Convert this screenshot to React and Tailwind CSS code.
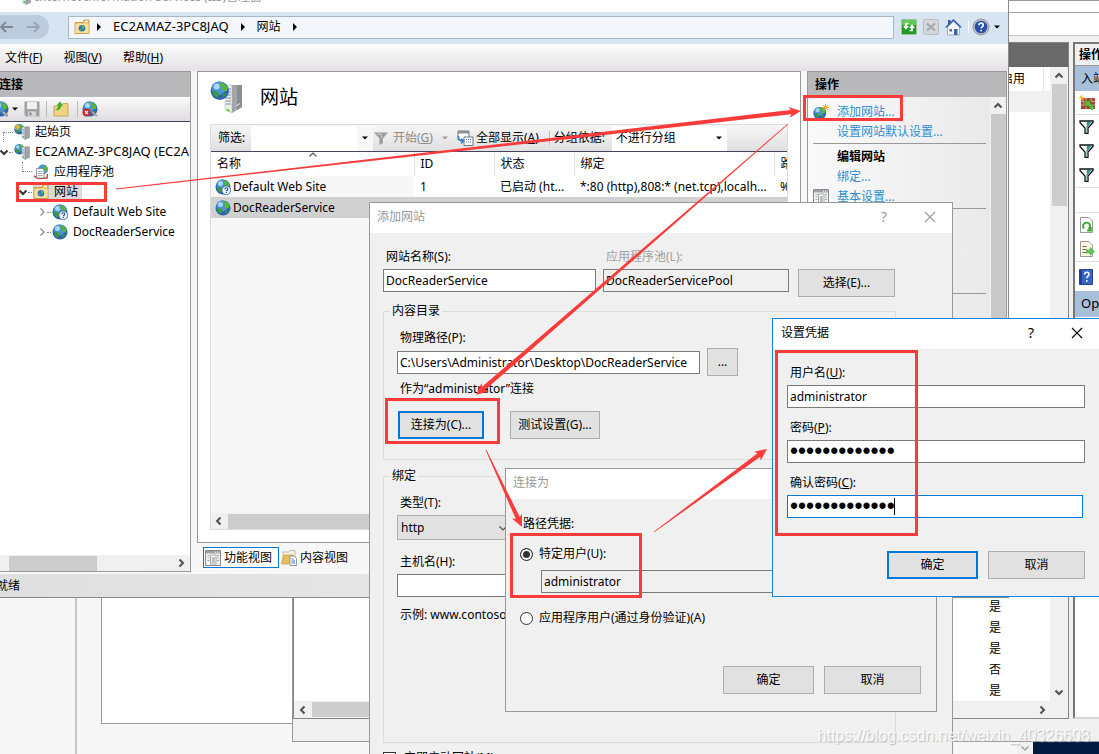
import { clsx } from "clsx";

/* ---------- icons ---------- */

function GlobeShape() {
  return (
    <g>
      <circle cx="8" cy="8" r="7.5" fill="#2b62b4" />
      <circle cx="7" cy="6" r="5.5" fill="#4c93dd" />
      <circle cx="5.5" cy="4.5" r="2.5" fill="#a9d6f5" />
      <path d="M8 1.2l4 .8 2.6 3.2-.8 3-2.6.4-2-2 .6-2-2-1.4z" fill="#57b53c" />
      <path d="M2 7.5l3 .6 2.4 2-.8 2.6L5.4 14 2.6 11z" fill="#3d9a33" />
      <path d="M10.5 10.5l2.8-.5-1 2.6-2.2 1.2z" fill="#3d9a33" />
    </g>
  );
}

function Globe({ size = 16, badge }) {
  return (
    <svg width={size} height={size} viewBox="0 0 16 16" className="shrink-0">
      {badge === "new" ? (
        <g transform="translate(0 2.500) scale(.84)">
          <GlobeShape />
        </g>
      ) : (
        <GlobeShape />
      )}
      {badge === "help" && (
        <g>
          <circle cx="11.3" cy="11.3" r="4.4" fill="#e9f1fb" stroke="#3a5f9c" strokeWidth=".8" />
          <path d="M9.9 10.2c0-1.9 2.9-1.8 2.9 0 0 1-1.4 1.1-1.4 2M11.4 13v.9" fill="none" stroke="#26498a" strokeWidth="1.1" />
        </g>
      )}
      {badge === "stop" && (
        <g>
          <path d="M10 11l5 4" stroke="#9ba3ad" strokeWidth="2.200" />
          <circle cx="4.5" cy="11.5" r="4" fill="#c3272b" />
          <path d="M2.900 9.9l3.2 3.2M6.100 9.9l-3.2 3.2" stroke="#fff" strokeWidth="1.2" />
        </g>
      )}
      {badge === "plug" && <path d="M8 10l4 1 3 3-1 1.5-3.500-2z" fill="#a8b0b9" stroke="#6d7680" strokeWidth=".6" />}
      {badge === "new" && (
        <g stroke="#e9a21b">
          <path d="M12.500 0v7M9 3.500h7M10 1l5 5M15 1l-5 5" />
          <circle cx="12.500" cy="3.500" r="1" fill="#ffe27a" />
        </g>
      )}
    </svg>
  );
}

function SiteFolder() {
  return (
    <svg width="16" height="16" viewBox="0 0 16 16" className="shrink-0">
      <path d="M1 3.500h8l1-2.500h5v13.500H1z" fill="#eccb76" stroke="#b98f35" strokeWidth=".8" />
      <path d="M11 2.200h3" stroke="#fff" />
      <path d="M1.500 5h13v9h-13z" fill="#f6df9f" />
      <circle cx="8" cy="9.300" r="3.300" fill="#2f74c4" />
      <path d="M8 6.200l2.500 1-.5 2.500-2-.5zM5.500 9l2 1-.5 2.200z" fill="#5dbb3f" />
    </svg>
  );
}

function ServerIcon({ size = 16, star }) {
  return (
    <svg width={size} height={size} viewBox="0 0 16 16" className="shrink-0">
      <g transform="scale(.68)">
        <GlobeShape />
      </g>
      <path d="M8 3.500l3-.7v12.700L8 14z" fill="#e3e5e8" stroke="#9aa0a6" strokeWidth=".4" />
      <path d="M11 2.800h4.500v10.700L11 15.500z" fill="#9fa4a9" stroke="#73787d" strokeWidth=".4" />
      <path d="M8.500 5.500h2M8.500 7h2M8.500 8.500h2M8.500 10h2" stroke="#7d838a" strokeWidth=".6" />
      <circle cx="9.500" cy="13" r=".9" fill="#48c22c" />
      {star && <path d="M3 0v6M0 3h6M1 1l4 4M5 1L1 5" stroke="#f0b429" strokeWidth="1" />}
    </svg>
  );
}

function BigServer() {
  return (
    <svg width="34" height="34" viewBox="0 0 34 34" className="shrink-0">
      <path d="M15 5l7-1v28l-7-4z" fill="#eceef0" stroke="#b5b9bd" strokeWidth=".6" />
      <path d="M22 4h10v22l-10 6z" fill="#a4a7aa" />
      <path d="M27 4h5v22l-5 3z" fill="#8b8e91" />
      <path d="M16 8h5M16 11h5M16 14h5M16 17h5M16 20h5M16 23h5" stroke="#83888d" strokeWidth="1.200" />
      <path d="M16.500 28.500l3 1.500" stroke="#6bd23c" strokeWidth="2" />
      <path d="M26 25l4-2.500" stroke="#e8e8e8" strokeWidth="1" />
      <g transform="scale(1.220)">
        <GlobeShape />
      </g>
    </svg>
  );
}

function PoolIcon() {
  return (
    <svg width="16" height="16" viewBox="0 0 16 16" className="shrink-0">
      <circle cx="10" cy="5.500" r="5" fill="#4a8fd0" />
      <path d="M10 .8l3.500 1.500 1 4-2 2-2-3z" fill="#5bb540" />
      <path d="M1 12l4 2.500 9-.5.500-4" fill="none" stroke="#cf3a32" strokeWidth="1.500" />
      <path d="M3.500 4.500h6l1.500 1.500v8H3.500z" fill="#fff" stroke="#7c828a" strokeWidth=".8" />
      <path d="M5 7.500h4.500M5 9.500h4.500M5 11.500h4.500" stroke="#8f9bb0" strokeWidth=".8" />
    </svg>
  );
}

function FloppyIcon() {
  return (
    <svg width="16" height="16" viewBox="0 0 16 16" className="shrink-0">
      <path d="M.5.5h15v15H2L.5 14z" fill="#a2a2a4" />
      <path d="M3 1h10v7H3z" fill="#f1f1f1" />
      <path d="M4 10.500h8v5H4z" fill="#d8d8d8" />
      <path d="M5.500 11.500h2v3h-2z" fill="#8a8a8c" />
    </svg>
  );
}

function FolderUp() {
  return (
    <svg width="16" height="16" viewBox="0 0 16 16" className="shrink-0">
      <path d="M1 5h8l1-2.500h5V15H1z" fill="#f0d283" stroke="#c19a43" strokeWidth=".8" />
      <path d="M2 9c2-.5 3-2 3.200-4.500H3.500L7 .5l3 4H8.200C8 8 5.500 10 2 9z" fill="#3cad2f" />
    </svg>
  );
}

function HelpCircle() {
  return (
    <svg width="18" height="18" viewBox="0 0 18 18" className="shrink-0">
      <circle cx="9" cy="9" r="8" fill="#b9bfc9" stroke="#8b919c" strokeWidth=".8" />
      <circle cx="9" cy="9" r="6.300" fill="#2951a8" />
      <path d="M6.800 7.300c0-3 4.500-2.900 4.500 0 0 1.500-2.200 1.600-2.200 3M9.100 11.700v1.600" fill="none" stroke="#fff" strokeWidth="1.600" />
    </svg>
  );
}

function HomeIcon() {
  return (
    <svg width="17" height="17" viewBox="0 0 17 17" className="shrink-0">
      <path d="M3 1h2.500v5H3z" fill="#3a57a6" />
      <path d="M2.500 8L8.500 2.500 14.500 8v8h-12z" fill="#f1f3f8" stroke="#8c94a8" strokeWidth=".7" />
      <path d="M.8 8.500L8.500 1l7.700 7.500" fill="none" stroke="#3d5cae" strokeWidth="1.500" />
      <path d="M9 10h3.500v6H9z" fill="#2f66b8" />
      <path d="M4.500 10h2.500v2.500H4.500z" fill="#667" />
    </svg>
  );
}

function RefreshBox() {
  return (
    <svg width="16" height="16" viewBox="0 0 16 16" className="shrink-0">
      <rect x=".5" y=".5" width="15" height="15" rx="1" fill="#249a25" stroke="#9fc29c" />
      <path d="M1 1h14v5H1z" fill="#62c755" />
      <path d="M7.500 4.500H5v4M2.800 7L5 9.500 7.200 7M8.500 11.500h2.500v-4M8.800 9L11 6.500 13.200 9" fill="none" stroke="#fff" strokeWidth="1.600" />
    </svg>
  );
}

function StopBox() {
  return (
    <svg width="16" height="16" viewBox="0 0 16 16" className="shrink-0">
      <rect x=".5" y=".5" width="15" height="15" rx="1" fill="#d5d7da" stroke="#b9bcc0" />
      <path d="M4 4.500l8 7M12 4.500l-8 7" stroke="#a3a6aa" strokeWidth="2" />
    </svg>
  );
}

function Funnel({ className = "text-[#9b9b9b]" }) {
  return (
    <svg width="16" height="16" viewBox="0 0 16 16" className={clsx("shrink-0", className)}>
      <path d="M1 2.500h14L9.800 8.500v4.800L6.500 15V8.500z" fill="currentColor" />
      <path d="M4 4h4l1 4" fill="none" stroke="#fff" strokeOpacity=".5" />
    </svg>
  );
}

function TealFunnel() {
  return (
    <svg width="15" height="14" viewBox="0 0 15 14" className="shrink-0">
      <path d="M1 1h13v1.500L9 8v5.500H6V8L1 2.500z" fill="#fff" stroke="#111" strokeWidth="1.300" />
      <path d="M8 2h4.500L8.500 7v5.500H7.500V7z" fill="#2a9090" />
    </svg>
  );
}

function ShowAll() {
  return (
    <svg width="17" height="16" viewBox="0 0 17 16" className="shrink-0">
      <path d="M1 1h11v9H1z" fill="#fff" stroke="#70757d" />
      <path d="M1 1h11v2.500H1z" fill="#8c919a" />
      <path d="M7 7h9v8.500H7z" fill="#fff" stroke="#70757d" />
      <path d="M9 9.500h1M11 9.500h1M13 9.500h1M9 12h1M11 12h1M13 12h1" stroke="#4a6cb5" strokeWidth="1.200" />
      <path d="M1.500 6c0 4 1 5 4 5M4 8.500L6.500 11 4 13.500" fill="none" stroke="#2e86c8" strokeWidth="1.600" />
    </svg>
  );
}

function FormIcon() {
  return (
    <svg width="16" height="16" viewBox="0 0 16 16" className="shrink-0">
      <path d="M.5.5h15v15H.5z" fill="#f3f3f3" stroke="#85888c" />
      <path d="M1 1h14v2.500H1z" fill="#9da1a6" />
      <path d="M10 2.200h1M12 2.200h1M14 2.200h.6" stroke="#fff" />
      <path d="M2.500 5.500h2M2.500 8h2M2.500 10.500h2M12 5.500h2M12 8h2M12 10.500h2" stroke="#a3a7ac" />
      <path d="M5.500 5h5.500v9H5.500z" fill="#fff" stroke="#8d9196" strokeWidth=".8" />
      <path d="M6.800 8h3M6.800 10h3M6.800 12h3" stroke="#555" strokeWidth=".8" />
    </svg>
  );
}

function ContentIcon() {
  return (
    <svg width="16" height="16" viewBox="0 0 16 16" className="shrink-0">
      <path d="M2 2h6l1-1.500h5V12H2z" fill="#f7f1de" stroke="#a7a18b" strokeWidth=".7" />
      <path d="M.5 14L3 5h9l-2 9z" fill="#e8bd5c" stroke="#b98f35" strokeWidth=".6" />
      <path d="M9 6h4l2.500 2.500v7H9z" fill="#fff" stroke="#7c828a" strokeWidth=".8" />
      <path d="M10.500 9h2M10.500 11h3.500M10.500 13h3.500" stroke="#3b6fc0" strokeWidth="1" />
    </svg>
  );
}

function WallIcon() {
  return (
    <svg width="16" height="16" viewBox="0 0 16 16" className="shrink-0">
      <path d="M2 3h14v11H2z" fill="#a4452f" />
      <path d="M2 6.500h14M2 10h14M7 3v3.500M12 3v3.500M5 6.500V10M10 6.500V10M7 10v4" stroke="#e2b5a2" strokeWidth=".8" />
      <path d="M3 0v6M0 3h6M1 1l4 4" stroke="#f0b429" />
      <path d="M6 6h6L10.500 8l5 4.500L13 15l-4.500-5L6.500 12z" fill="#58c43d" stroke="#2e8a22" strokeWidth=".6" />
    </svg>
  );
}

function PageIcon({ kind }) {
  return (
    <svg width="16" height="16" viewBox="0 0 16 16" className="shrink-0">
      <path d="M1.500.5H10L13.500 4v11.500h-12z" fill={kind === "export" ? "#fbf6df" : "#fff"} stroke="#999" />
      {kind === "refresh" ? (
        <path d="M5 11.500A3.500 3.500 0 1 1 9.500 12M11.800 10v3.500H8.200" fill="none" stroke="#35a72f" strokeWidth="1.900" />
      ) : (
        <g>
          <path d="M3.500 5.500h4M3.500 8.500h4M3.500 11.500h4" stroke="#666" />
          <path d="M7.500 9H11V6.500l4.500 4L11 14.500V12H7.500z" fill="#62c755" stroke="#389a2d" strokeWidth=".5" />
        </g>
      )}
    </svg>
  );
}

function HelpBook() {
  return (
    <svg width="14" height="16" viewBox="0 0 14 16" className="shrink-0">
      <path d="M.5.5h13v15H.5z" fill="#3a63c8" stroke="#24418c" />
      <path d="M1 1h2v14H1z" fill="#24418c" />
      <path d="M5.500 5.500c0-3 4.500-2.800 4.500 0 0 1.700-2.200 1.700-2.200 3.800M7.800 11v1.800" fill="none" stroke="#fff" strokeWidth="1.500" />
    </svg>
  );
}

const chevrons = {
  left: "M6.500 1.500L3 5l3.500 3.500",
  right: "M3.500 1.500L7 5 3.500 8.500",
  up: "M1.500 6.500L5 3l3.500 3.500",
  down: "M1.500 3.500L5 7l3.500-3.500",
};

function Chevron({ dir, className = "text-[#505050]", thin }) {
  return (
    <svg width="10" height="10" viewBox="0 0 10 10" className={clsx("shrink-0", className)}>
      <path d={chevrons[dir]} fill="none" stroke="currentColor" strokeWidth={thin ? 1.2 : 2} />
    </svg>
  );
}

function Caret({ dir = "down", className = "text-black" }) {
  return (
    <svg width="6" height="8" viewBox="0 0 6 8" className={clsx("shrink-0", className)}>
      <path d={dir === "down" ? "M0 2.500h6L3 5.500z" : "M1 0l4 4-4 4z"} fill="currentColor" />
    </svg>
  );
}

/* ---------- shared controls ---------- */

function Btn({ children, className, primary }) {
  return (
    <button
      className={clsx(
        "h-7 shrink-0 bg-[#e1e1e1] text-center",
        primary ? "border-2 border-[#0078d7]" : "border border-[#adadad]",
        className
      )}
    >
      {children}
    </button>
  );
}

function TextBox({ className, ...props }) {
  return (
    <input
      className={clsx("h-[23px] min-w-0 rounded-none border px-[2px] outline-none", className)}
      {...props}
    />
  );
}

function Dialog({ title, active, help = true, className, children }) {
  return (
    <section
      className={clsx(
        "absolute flex flex-col border bg-[#f0f0f0]",
        active ? "border-[#1883d7]" : "border-[#999]",
        className
      )}
    >
      <header
        className={clsx(
          "flex h-[30px] shrink-0 items-center justify-between bg-white pr-4 pb-[2px]",
          active ? "pl-2 text-black" : "pl-[7px] text-[#999]"
        )}
      >
        <h2>{title}</h2>
        {help && (
          <div className="flex items-center gap-[34px]">
            <button className="w-3 text-sm" aria-label="帮助">?</button>
            <button aria-label="关闭">
              <svg width="12" height="12" viewBox="0 0 12 12">
                <path d="M1 1l10 10M11 1L1 11" stroke="currentColor" strokeWidth="1.100" />
              </svg>
            </button>
          </div>
        )}
      </header>
      {children}
    </section>
  );
}

function TreeRow({ guide, open, icon, label, selected }) {
  return (
    <li className="flex h-5 items-center whitespace-nowrap">
      <span className={clsx("shrink-0 border-dotted border-[#888]", guide)} />
      {open !== undefined && (
        <Chevron dir={open ? "down" : "right"} thin={!open} className={open ? "text-[#333]" : "text-[#888]"} />
      )}
      {open !== undefined && <span className="w-1 shrink-0 border-t border-dotted border-[#888]" />}
      <span className={clsx("ml-px flex items-center gap-[5px] pr-1", selected && "bg-[#d9d9d9]")}>
        {icon}
        {label}
      </span>
    </li>
  );
}

/* ---------- windows ---------- */

function ServerManager() {
  return (
    <div className="absolute inset-0 flex bg-[#f7f7f7]">
      <div className="w-[77px] border-r-2 border-[#c8c8c8]" />
      <div className="mb-[30px] ml-6 w-72 border border-[#999] bg-white" />
    </div>
  );
}

const enabledRules = ["是", "是", "是", "否", "是"];

function Firewall() {
  return (
    <div className="absolute top-0 left-[292px] flex h-[742px] w-[840px] flex-col border border-[#999] bg-[#f0f0f0]">
      <div className="h-3 shrink-0 border-b border-[#a0a0a0] bg-white" />
      <div className="h-[23px] shrink-0 border-b border-[#c8c8c8] bg-white" />
      <div className="flex min-h-0 flex-1 gap-1 pt-[6px] pb-[22px]">
        <div className="flex w-[776px] shrink-0 flex-col border border-[#82858f] bg-white">
          <div className="h-6 shrink-0 bg-[#696969]" />
          <div className="flex min-h-0 flex-1">
            <div className="flex flex-1 flex-col">
              <div className="mr-[6px] flex h-6 shrink-0 items-center justify-end border-r border-[#e5e5e5] pr-[18px]">
                启用
              </div>
              <div className="h-[21px] shrink-0 bg-[#f0f0f0]" />
              <div className="flex-1" />
              <table className="w-full">
                <tbody>
                  {enabledRules.map((value, i) => (
                    <tr key={i} className="h-[21px]">
                      <td className="pr-[49px] text-right leading-[21px]">{value}</td>
                    </tr>
                  ))}
                </tbody>
              </table>
            </div>
            <div className="flex w-[18px] flex-col items-center bg-[#f0f0f0]">
              <div className="flex h-[17px] items-center">
                <Chevron dir="up" />
              </div>
              <div className="h-[122px] w-[15px] bg-[#cdcdcd]" />
              <div className="flex flex-1 items-end pb-1">
                <Chevron dir="down" />
              </div>
            </div>
          </div>
          <div className="flex h-[17px] shrink-0 items-center bg-[#f0f0f0] pr-[21px] pl-1">
            <Chevron dir="left" />
            <div className="mr-8 ml-1 h-[15px] w-[500px] bg-[#cdcdcd]" />
            <div className="flex-1" />
            <Chevron dir="right" />
          </div>
        </div>
        <div className="flex flex-1 flex-col border-2 border-r-0 border-[#777] border-b-[#d5d5d5] bg-white">
          <div className="flex h-[22px] items-center border-b border-[#999] bg-[#f0f0f0] pl-1 font-bold">操作</div>
          <div className="flex h-[25px] items-center bg-[#a8bfdb] pl-[6px]">入站</div>
          <div className="flex h-6 items-center border-b border-[#e0e0e0] pl-1"><WallIcon /></div>
          <div className="flex h-6 items-center pl-1"><TealFunnel /></div>
          <div className="flex h-6 items-center pl-1"><TealFunnel /></div>
          <div className="flex h-6 items-center pl-1"><TealFunnel /></div>
          <div className="h-[26px] border-y border-[#e0e0e0]" />
          <div className="flex h-6 items-center pl-1"><PageIcon kind="refresh" /></div>
          <div className="flex h-6 items-center pl-1"><PageIcon kind="export" /></div>
          <div className="flex h-[30px] items-center border-t border-[#e0e0e0] pl-1"><HelpBook /></div>
          <div className="flex h-[26px] items-center bg-[#a8bfdb] pl-[6px] text-[13px]">Op</div>
        </div>
      </div>
    </div>
  );
}

function NavBar() {
  return (
    <div className="flex h-8 shrink-0 items-center bg-[#d7e4f2] pr-2 pb-[2px]">
      <div className="flex h-6 w-[56px] items-center justify-between rounded-r-xl bg-[#bccbdd] pr-2 pl-[6px] text-[#7d8896]">
        <svg width="14" height="12" viewBox="0 0 14 12">
          <path d="M14 6H2M7 1L2 6l5 5" fill="none" stroke="currentColor" strokeWidth="1.800" />
        </svg>
        <svg width="14" height="12" viewBox="0 0 14 12" className="text-[#9aa6b5]">
          <path d="M0 6h12M7 1l5 5-5 5" fill="none" stroke="currentColor" strokeWidth="1.800" />
        </svg>
      </div>
      <div className="ml-[19px] flex h-[23px] flex-1 items-center border border-[#a8b6c6] bg-[#f3f7fc] pl-[5px]">
        <SiteFolder />
        <span className="ml-[6px] flex items-center gap-[11px]">
          <Caret dir="right" />
          <span className="text-[13px]">EC2AMAZ-3PC8JAQ</span>
          <Caret dir="right" />
          <span>网站</span>
          <Caret dir="right" />
        </span>
      </div>
      <div className="ml-[7px] flex items-center gap-[6px]">
        <RefreshBox />
        <StopBox />
        <HomeIcon />
        <span className="h-3 w-px bg-white" />
      </div>
      <div className="ml-[3px] flex items-center gap-1">
        <HelpCircle />
        <Caret />
      </div>
    </div>
  );
}

function Connections() {
  return (
    <div className="flex w-[199px] shrink-0 flex-col border border-[#999] bg-white">
      <h3 className="flex h-[25px] shrink-0 items-center bg-[#b9b8ba] pl-[6px] font-bold">连接</h3>
      <div className="flex h-[25px] shrink-0 items-center border-b border-[#44445c] bg-linear-to-b from-[#fafafa] to-[#dedcde]">
        <Globe badge="plug" />
        <span className="ml-[3px]"><Caret /></span>
        <span className="ml-[6px]"><FloppyIcon /></span>
        <span className="mx-[6px] h-4 w-px bg-[#bdbdb0]" />
        <FolderUp />
        <span className="mr-1 ml-2 h-4 w-px bg-[#bdbdb0]" />
        <Globe badge="stop" />
      </div>
      <ul className="flex-1 overflow-hidden">
        <TreeRow guide="ml-[10px] h-[10px] w-[10px] self-end border-t border-l" icon={<ServerIcon star />} label="起始页" />
        <TreeRow guide="w-[6px]" open icon={<ServerIcon />} label={<span className="text-[13px]">EC2AMAZ-3PC8JAQ (EC2AMAZ</span>} />
        <TreeRow guide="ml-[29px] h-[10px] w-[10px] self-start border-b border-l" icon={<PoolIcon />} label="应用程序池" />
        <TreeRow guide="w-[25px]" open icon={<SiteFolder />} label="网站" selected />
        <TreeRow guide="w-11" open={false} icon={<Globe badge="help" />} label="Default Web Site" />
        <TreeRow guide="w-11" open={false} icon={<Globe />} label="DocReaderService" />
      </ul>
      <div className="flex h-4 shrink-0 items-center bg-[#f0f0f0] pr-1">
        <Chevron dir="left" />
        <div className="ml-[6px] h-[15px] w-[88px] bg-[#cdcdcd]" />
        <div className="flex-1" />
        <Chevron dir="right" />
      </div>
    </div>
  );
}

function SitesTable() {
  return (
    <table className="w-[780px] table-fixed border-collapse bg-white text-left">
      <thead>
        <tr className="h-6 [&>th]:border-r [&>th]:border-[#e2e2e2] [&>th]:pl-[6px] [&>th]:font-normal">
          <th className="w-[203px]">名称</th>
          <th className="w-20">ID</th>
          <th className="w-20">状态</th>
          <th className="w-[200px]">绑定</th>
          <th>路径</th>
        </tr>
      </thead>
      <tbody className="whitespace-nowrap [&_td]:pl-[6px]">
        <tr className="h-[21px]">
          <td className="bg-[#f7f7f7]">
            <span className="-ml-[2px] flex items-center gap-[2px]"><Globe badge="help" />Default Web Site</span>
          </td>
          <td>1</td>
          <td>已启动 (ht...</td>
          <td>*:80 (http),808:* (net.tcp),localh...</td>
          <td>%S</td>
        </tr>
        <tr className="h-[21px] bg-[#d1d1d1]">
          <td>
            <span className="-ml-[2px] flex items-center gap-[2px]"><Globe />DocReaderService</span>
          </td>
          <td />
          <td />
          <td />
          <td />
        </tr>
      </tbody>
    </table>
  );
}

function Sites() {
  return (
    <div className="flex min-w-0 flex-1 flex-col">
      <div className="flex flex-1 flex-col border border-[#999] bg-white px-3 pb-3">
        <div className="flex h-[52px] shrink-0 items-center gap-4">
          <BigServer />
          <h1 className="text-[19px]">网站</h1>
        </div>
        <div className="relative flex flex-1 flex-col overflow-hidden border border-[#dcdcdc] bg-[#f7f7f7]">
          <div className="flex h-[27px] shrink-0 items-center border-b border-[#44445c] bg-linear-to-b from-[#f6f6f6] to-[#e0dfe1] whitespace-nowrap">
            <label htmlFor="filter" className="w-10 shrink-0 pl-[7px]">筛选:</label>
            <input id="filter" className="h-[25px] w-[106px] bg-white outline-none" />
            <button className="flex h-[25px] w-4 items-center justify-center bg-[#f7f7f7]" aria-label="筛选历史"><Caret /></button>
            <button className="flex items-center gap-1 text-[#8c8c8c]">
              <Funnel />
              <span>开始(<u>G</u>)</span>
            </button>
            <span className="mx-[9px]"><Caret className="text-[#999]" /></span>
            <button className="flex items-center gap-[2px]">
              <ShowAll />
              <span>全部显示(<u>A</u>)</span>
            </button>
            <span className="mr-1 ml-[10px] h-[14px] w-px bg-[#bdbdb0]" />
            <span className="w-[58px] shrink-0">分组依据:</span>
            <div className="flex h-[25px] w-[115px] items-center bg-white pr-[5px]">
              <select className="flex-1 appearance-none pl-1 outline-none" aria-label="分组依据">
                <option>不进行分组</option>
              </select>
              <Caret />
            </div>
          </div>
          {/* sort marker above the first column */}
          <Chevron dir="up" thin className="absolute top-[25px] left-[97px] text-[#555]" />
          <SitesTable />
          <div className="flex-1" />
          <div className="flex h-4 shrink-0 items-center bg-[#f0f0f0] pl-[3px]">
            <Chevron dir="left" />
            <div className="ml-1 h-[15px] w-[400px] bg-[#cdcdcd]" />
          </div>
        </div>
      </div>
      <div className="flex h-[29px] shrink-0 items-center gap-[2px] pl-[6px]">
        <button className="flex h-[21px] items-center gap-[3px] border border-[#0078d7] bg-white pr-[6px] pl-px">
          <FormIcon />功能视图
        </button>
        <button className="flex items-center gap-[3px]">
          <ContentIcon />内容视图
        </button>
      </div>
    </div>
  );
}

function ActionRow({ icon, children, heading }) {
  return (
    <div className="flex h-5 items-center whitespace-nowrap">
      <span className="w-6 shrink-0">{icon}</span>
      {heading ? <b>{children}</b> : <a href="#" className="text-[#2f8fd3]">{children}</a>}
    </div>
  );
}

function Actions() {
  return (
    <div className="flex w-[200px] shrink-0 flex-col border border-[#999] bg-linear-to-r from-[#fafafa] to-[#e8e8e8]">
      <h3 className="flex h-[25px] shrink-0 items-center bg-[#b9b8ba] pl-[7px] font-bold">操作</h3>
      <div className="flex flex-1">
        <div className="flex-1 pt-[5px] pr-1 pl-[5px]">
          <ActionRow icon={<Globe badge="new" />}>添加网站...</ActionRow>
          <ActionRow>设置网站默认设置...</ActionRow>
          <div className="mt-px mb-[3px] h-px bg-[#999]" />
          <ActionRow heading>编辑网站</ActionRow>
          <ActionRow>绑定...</ActionRow>
          <ActionRow icon={<FormIcon />}>基本设置...</ActionRow>
          <div className="mt-px h-px bg-[#999]" />
          <div className="mt-[84px] h-px bg-[#999]" />
        </div>
        <div className="flex w-4 flex-col items-center bg-[#f0f0f0]">
          <div className="flex h-[17px] items-center"><Chevron dir="up" /></div>
          <div className="w-[15px] flex-1 bg-[#c9c9c9]" />
        </div>
      </div>
    </div>
  );
}

function IisManager() {
  return (
    <main className="absolute -top-[19px] -left-2 flex h-[617px] w-[1017px] flex-col border border-[#8a8a8a] bg-[#f7f7f7]">
      <header className="flex h-[30px] shrink-0 items-center gap-[4px] bg-white pl-[22px] text-[#999]">
        <ServerIcon />
        Internet Information Services (IIS)管理器
      </header>
      <NavBar />
      <nav className="flex h-[27px] shrink-0 items-center gap-[21px] bg-linear-to-b from-[#fcfcfc] to-[#e3e1e3] pl-3">
        <button>文件(<u>F</u>)</button>
        <button>视图(<u>V</u>)</button>
        <button>帮助(<u>H</u>)</button>
      </nav>
      <div className="-ml-px flex min-h-0 flex-1 gap-[6px] pr-px">
        <Connections />
        <Sites />
        <Actions />
      </div>
      <footer className="mt-[2px] flex h-[23px] shrink-0 items-center bg-linear-to-r from-[#e0dfdf] to-[#f0f0f0] pl-[3px]">就绪</footer>
    </main>
  );
}

function AddSite() {
  return (
    <Dialog title="添加网站" className="top-[202px] left-[369px] h-[570px] w-[584px]">
      <div className="pt-4 pr-14 pl-[13px]">
        <div className="flex items-end">
          <div className="flex flex-col gap-1 self-start">
            <label htmlFor="site" className="pl-[3px] leading-4">网站名称(S):</label>
            <TextBox id="site" className="w-[213px] border-[#7a7a7a] bg-white" defaultValue="DocReaderService" />
          </div>
          <div className="ml-[7px] flex flex-col gap-1 self-start">
            <label htmlFor="pool" className="pl-[3px] leading-4 text-[#a0a0a0]">应用程序池(L):</label>
            <TextBox id="pool" readOnly className="w-[186px] border-[#7a7a7a] bg-[#f0f0f0]" defaultValue="DocReaderServicePool" />
          </div>
          <Btn className="mt-5 ml-[9px] w-[97px]">选择(E)...</Btn>
        </div>

        <fieldset className="mt-[6px] border border-[#dcdcdc] px-[13px] pb-5">
          <legend className="-ml-[7px] px-[2px] leading-4">内容目录</legend>
          <label htmlFor="path" className="mt-[11px] block pl-[3px] leading-4">物理路径(P):</label>
          <div className="mt-[2px] flex items-center gap-[7px]">
            <TextBox id="path" className="w-[303px] border-[#7a7a7a] bg-white" defaultValue="C:\Users\Administrator\Desktop\DocReaderService" />
            <Btn className="w-[31px]">...</Btn>
          </div>
          <p className="mt-[5px] pl-[3px] leading-4">作为“administrator”连接</p>
          <div className="mt-[14px] flex gap-[26px] pl-px">
            <Btn primary className="w-[86px]">连接为(C)...</Btn>
            <Btn className="w-[90px]">测试设置(G)...</Btn>
          </div>
        </fieldset>

        <fieldset className="mt-2 h-[275px] border border-[#dcdcdc] px-[13px]">
          <legend className="-ml-[7px] px-[2px] leading-4">绑定</legend>
          <label htmlFor="type" className="mt-[11px] block pl-[3px] leading-4">类型(T):</label>
          <div className="mt-1 flex h-[25px] w-[120px] items-center border border-[#adadad] bg-[#e1e1e1] pr-2">
            <select id="type" className="flex-1 appearance-none pl-[3px] outline-none">
              <option>http</option>
            </select>
            <Chevron dir="down" thin />
          </div>
          <label htmlFor="host" className="mt-[14px] block pl-[3px] leading-4">主机名(H):</label>
          <TextBox id="host" className="mt-1 block w-[300px] border-[#7a7a7a] bg-white" />
          <p className="mt-[10px] pl-[3px] leading-4 whitespace-nowrap">示例: www.contoso.com</p>
        </fieldset>
        <label className="mt-[7px] flex items-center gap-[8px]">
          <input type="checkbox" defaultChecked={false} className="size-[13px] appearance-none border border-[#333] bg-white" />
          立即启动网站(M)
        </label>
      </div>
    </Dialog>
  );
}

function Radio({ label, ...props }) {
  return (
    <label className="flex h-4 items-center gap-[6px]">
      <input
        type="radio"
        name="credentials"
        className="size-[13px] appearance-none rounded-full border border-[#333] bg-white checked:bg-[#333] checked:shadow-[inset_0_0_0_2px_#fff]"
        {...props}
      />
      {label}
    </label>
  );
}

function ConnectAs() {
  return (
    <Dialog title="连接为" help={false} className="top-[468px] left-[505px] h-[244px] w-[432px]">
      <div className="flex flex-col pt-[17px] pr-[15px] pl-[14px]">
        <p className="pl-[3px] leading-4">路径凭据:</p>
        <div className="mt-[14px]"><Radio label="特定用户(U):" defaultChecked /></div>
        <TextBox readOnly aria-label="特定用户" className="mt-2 ml-[21px] w-72 border-[#7a7a7a] bg-[#f0f0f0]" defaultValue="administrator" />
        <div className="mt-[17px]"><Radio label="应用程序用户(通过身份验证)(A)" /></div>
        <div className="mt-10 flex justify-end gap-[10px]">
          <Btn className="w-[91px]">确定</Btn>
          <Btn className="w-[97px]">取消</Btn>
        </div>
      </div>
    </Dialog>
  );
}

function SetCredentials() {
  return (
    <Dialog title="设置凭据" active className="top-[318px] left-[772px] h-[279px] w-[328px]">
      <div className="flex flex-col pt-4 pr-[14px] pl-[14px]">
        <label htmlFor="user" className="pl-[3px] leading-4">用户名(<u>U</u>):</label>
        <TextBox id="user" className="mt-1 border-[#7a7a7a] bg-white" defaultValue="administrator" />
        <label htmlFor="pwd" className="mt-3 pl-[3px] leading-4">密码(<u>P</u>):</label>
        <TextBox id="pwd" type="password" className="mt-1 border-[#7a7a7a] bg-white font-['Liberation_Sans',sans-serif] text-[23px]" defaultValue="administrator" />
        <label htmlFor="confirm" className="mt-3 pl-[3px] leading-4">确认密码(<u>C</u>):</label>
        <div className="relative mt-1 mr-[2px] flex">
          <TextBox id="confirm" type="password" className="flex-1 border-[#0078d7] bg-white font-['Liberation_Sans',sans-serif] text-[23px]" defaultValue="administrator" />
          <span className="absolute top-[3px] left-[107px] h-[17px] w-px bg-black" />
        </div>
        <div className="mt-[33px] flex justify-end gap-[10px]">
          <Btn primary className="w-[91px]">确定</Btn>
          <Btn className="w-[97px]">取消</Btn>
        </div>
      </div>
    </Dialog>
  );
}

/* ---------- annotations ---------- */

const boxes = [
  [16, 182, 91, 20],
  [803, 95, 100, 26],
  [385, 398, 115, 46],
  [510, 533, 132, 65],
  [775, 350, 143, 186],
];

const arrows = [
  [116, 189, 801, 111],
  [788, 124, 476, 395],
  [486, 450, 522, 527],
  [654, 532, 767, 449],
];

// tapered shaft that ends in a small arrow head
function arrowPoints([x1, y1, x2, y2]) {
  const len = Math.hypot(x2 - x1, y2 - y1);
  const ux = (x2 - x1) / len;
  const uy = (y2 - y1) / len;
  const at = (back, side) => `${x2 - ux * back - uy * side},${y2 - uy * back + ux * side}`;
  return [at(len, 0.4), at(10, 2.2), at(12, 5.5), at(0, 0), at(12, -5.5), at(10, -2.2), at(len, -0.4)].join(" ");
}

function Annotations() {
  return (
    <svg width="1099" height="754" className="pointer-events-none absolute top-0 left-0">
      {boxes.map(([x, y, w, h]) => (
        <rect key={x} x={x + 1.5} y={y + 1.5} width={w - 3} height={h - 3} fill="none" stroke="#fb3a3a" strokeWidth="3" />
      ))}
      {arrows.map((a) => (
        <polygon key={a[0]} points={arrowPoints(a)} fill="#fb3a3a" />
      ))}
    </svg>
  );
}

export default function App() {
  return (
    <div className="relative h-screen w-full overflow-hidden bg-[#f7f7f7] font-['Noto_Sans','Noto_Sans_CJK_SC',sans-serif] text-xs text-black">
      <ServerManager />
      <div className="absolute right-0 bottom-0 flex h-[13px] w-[146px]">
        <div className="flex-1 bg-[#f7f7f7]" />
        <div className="flex w-4 items-center justify-center bg-[#f0f0f0]"><Chevron dir="down" thin className="text-[#999]" /></div>
        <div className="w-[66px] bg-[#001b3f]" />
      </div>
      <Firewall />
      <IisManager />
      <AddSite />
      <ConnectAs />
      <SetCredentials />
      <Annotations />
      <span className="absolute right-[9px] bottom-[6px] font-['Liberation_Sans',sans-serif] text-base text-white/80 [text-shadow:1px_1px_1px_#bbb]">
        https://blog.csdn.net/weixin_40326608
      </span>
    </div>
  );
}
